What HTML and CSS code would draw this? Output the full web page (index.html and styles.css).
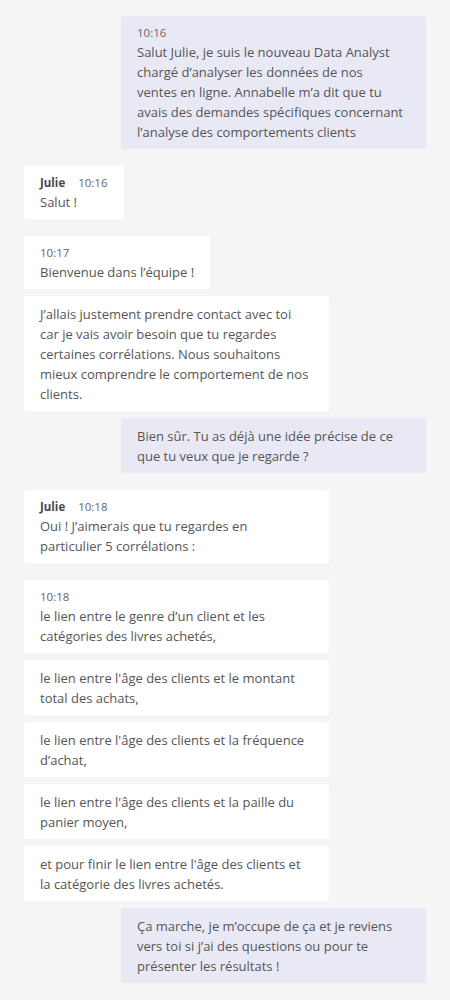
FILE: index.html
```html
<!DOCTYPE html>
<html lang="fr">
<head>
<meta charset="utf-8">
<title>Conversation</title>
<link rel="stylesheet" href="styles.css">
</head>
<body>
<div class="chat">
  <div class="msg me">
    <div class="meta"><span class="time">10:16</span></div>
    <div class="text">Salut Julie, je suis le nouveau Data Analyst<br>chargé d’analyser les données de nos<br>ventes en ligne. Annabelle m’a dit que tu<br>avais des demandes spécifiques concernant<br>l’analyse des comportements clients</div>
  </div>

  <div class="msg them new">
    <div class="meta"><span class="name">Julie</span><span class="time">10:16</span></div>
    <div class="text">Salut !</div>
  </div>

  <div class="msg them new">
    <div class="meta"><span class="time">10:17</span></div>
    <div class="text">Bienvenue dans l’équipe !</div>
  </div>
  <div class="msg them wide">
    <div class="text">J’allais justement prendre contact avec toi<br>car je vais avoir besoin que tu regardes<br>certaines corrélations. Nous souhaitons<br>mieux comprendre le comportement de nos<br>clients.</div>
  </div>

  <div class="msg me">
    <div class="text">Bien sûr. Tu as déjà une idée précise de ce<br>que tu veux que je regarde ?</div>
  </div>

  <div class="msg them wide new">
    <div class="meta"><span class="name">Julie</span><span class="time">10:18</span></div>
    <div class="text">Oui ! J’aimerais que tu regardes en<br>particulier 5 corrélations :</div>
  </div>

  <div class="msg them wide new">
    <div class="meta"><span class="time">10:18</span></div>
    <div class="text">le lien entre le genre d’un client et les<br>catégories des livres achetés,</div>
  </div>
  <div class="msg them wide">
    <div class="text">le lien entre l'âge des clients et le montant<br>total des achats,</div>
  </div>
  <div class="msg them wide">
    <div class="text">le lien entre l'âge des clients et la fréquence<br>d’achat,</div>
  </div>
  <div class="msg them wide">
    <div class="text">le lien entre l'âge des clients et la paille du<br>panier moyen,</div>
  </div>
  <div class="msg them wide">
    <div class="text">et pour finir le lien entre l'âge des clients et<br>la catégorie des livres achetés.</div>
  </div>

  <div class="msg me">
    <div class="text">Ça marche, je m’occupe de ça et je reviens<br>vers toi si j’ai des questions ou pour te<br>présenter les résultats !</div>
  </div>
</div>
</body>
</html>
```

FILE: styles.css
```css
html, body {
  margin: 0;
  padding: 0;
  background: #f5f5f5;
}

.chat {
  display: flex;
  flex-direction: column;
  gap: 7px;
  padding: 16px 24px 17px;
  font-family: "Open Sans", "Noto Sans", sans-serif;
  color: #555555;
}

.msg {
  box-sizing: border-box;
  max-width: 305px;
  padding: 8px 16px 7px;
  border-radius: 2px;
}

.msg.new {
  margin-top: 10px;
}

.me {
  align-self: flex-end;
  width: 305px;
  background: #e9e9f5;
}

.them {
  align-self: flex-start;
  background: #ffffff;
}

.them.wide {
  width: 305px;
}

.meta {
  display: flex;
  gap: 13px;
  font-size: 11.5px;
  line-height: 18px;
  color: #666666;
}

.name {
  font-weight: 700;
  color: #484848;
}

.text {
  font-size: 13px;
  line-height: 20px;
  white-space: nowrap;
}
```
